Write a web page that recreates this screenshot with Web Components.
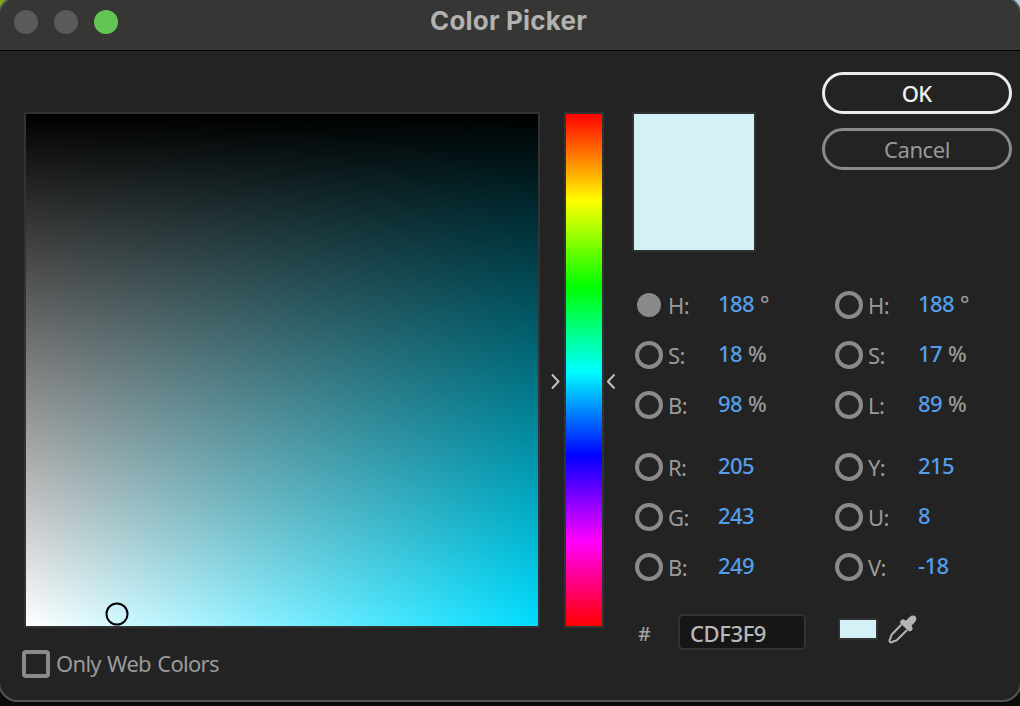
<!DOCTYPE html>
<html lang="en">
<head>
<meta charset="utf-8">
<title>Color Picker</title>
<style>
html,body{margin:0;height:100%;overflow:hidden;background:#0c0a0b}
body{background:linear-gradient(90deg,#7fa51c 0 20px,#0c0a0b 20px 1000px,#a9ccd6 1000px) 0 0/100% 12px no-repeat,#0c0a0b;font-family:"Noto Sans","Open Sans",sans-serif;font-size:22px;color:#9a9a9a}
</style>
</head>
<body>
<color-picker-window></color-picker-window>
<script>
function define(name, html, setup) {
  const template = document.createElement('template');
  template.innerHTML = html;
  customElements.define(name, class extends HTMLElement {
    constructor() {
      super();
      this.attachShadow({ mode: 'open' }).append(template.content.cloneNode(true));
    }
    connectedCallback() { if (setup) setup(this, this.shadowRoot); }
  });
}

define('title-bar', `
<style>
:host{display:grid;grid-template-columns:1fr auto 1fr;height:50px;background:#363634;border-bottom:1px solid #000;box-sizing:content-box}
.lights{display:flex;gap:16px;padding:10px 0 0 14px}
i{width:24px;height:24px;border-radius:50%;background:#5a5a58}
i.zoom{background:#62c655}
h1{margin:0;padding-right:3px;font:700 26px/42px Inter,sans-serif;letter-spacing:.2px;color:#b2b2b0}
</style>
<div class="lights"><i></i><i></i><i class="zoom"></i></div><h1><slot></slot></h1>`);

define('pill-button', `
<style>
:host{display:block}
button{display:block;box-sizing:border-box;width:190px;height:42px;border:3px solid #8a8a8a;border-radius:21px;background:none;padding:0;font:22px/34px "Noto Sans",sans-serif;letter-spacing:-.45px;color:#999}
:host([primary]) button{border-color:#ebebeb;color:#f0f0f0;font-weight:500;letter-spacing:-.8px;padding-right:1px}
</style>
<button><slot></slot></button>`);

define('shade-field', `
<style>
:host{display:block;position:relative;width:512px;height:512px;border:2px solid #323232;background:linear-gradient(#000,transparent),linear-gradient(90deg,#fff,#00ddff)}
svg{position:absolute;left:79px;top:488px;width:24px;height:24px}
</style><svg viewBox="0 0 24 24"><circle cx="12" cy="12" r="10.5" fill="none" stroke="#000" stroke-width="2"/></svg>`);

define('hue-slider', `
<style>
:host{display:flex;gap:4px}
.bar{width:36px;height:512px;border:2px solid #323232;background:linear-gradient(#f00,#ff0 17%,#0f0 33.7%,#0ff 50.2%,#00f 66.8%,#f0f 83.4%,#f00)}
svg{width:9px;height:18px;margin-top:260px;fill:none;stroke:#c0c0c0;stroke-width:2}
svg:last-child{margin-left:-1px}
</style>
<svg viewBox="0 0 9 18"><path d="M1 2.5 7.5 9.5 1 16.5"/></svg>
<div class="bar"></div>
<svg viewBox="0 0 9 18"><path d="M7.5 2.5 1 9.5 7.5 16.5"/></svg>`);

define('color-swatch', `
<style>:host{display:block;box-sizing:border-box;border:2px solid #323232;background:#d4f1f8}</style>`);

define('channel-row', `
<style>
:host{display:grid;grid-template-columns:28px 55px 1fr;height:50px;align-items:center}
i{box-sizing:border-box;width:28px;height:28px;border:4px solid #8a8a8a;border-radius:50%}
:host([selected]) i{width:24px;height:24px;margin-left:2px;background:#8a8a8a}
.label{padding:0 0 0 5px;line-height:30px;letter-spacing:-.6px;font-weight:450}
.value{padding-bottom:4px;line-height:30px;white-space:pre}
b{font-weight:500;color:#549ee9;letter-spacing:-.55px}
.unit{display:inline-block;margin-left:6px;font-weight:500}
</style>
<i></i><div class="label"></div><div class="value"><b></b><span class="unit"></span></div>`, (host, root) => {
  root.querySelector('.label').textContent = host.getAttribute('label') + ':';
  root.querySelector('b').textContent = host.getAttribute('value');
  const unit = root.querySelector('.unit'), u = host.getAttribute('unit');
  if (u) unit.textContent = u; else unit.remove();
});

define('channel-group', `
<style>:host{display:block}</style><slot></slot>`);

define('hex-row', `
<style>
:host{display:flex;align-items:flex-start;height:36px}
.hash{width:40px;box-sizing:border-box;font-size:20px;line-height:39px;color:#a0a0a0;font-weight:500}
.hex{box-sizing:border-box;width:128px;height:36px;border:2px solid #323232;border-radius:5px;background:#161616;padding-left:10px;line-height:34px;color:#b9b9b9;letter-spacing:-.4px;font-weight:500}
color-swatch{width:40px;height:22px;margin:4px 0 0 32px}
svg{width:30px;height:30px;margin:0 0 0 9.5px}
</style>
<div class="hash">#</div><div class="hex"><slot></slot></div><color-swatch></color-swatch>
<svg viewBox="0 0 30 30"><path d="M13.5 10.5 3.8 20.5C2.6 22 3 23.4 2.2 24.8 .5 27.4 2.3 29.4 5 27.7 6.4 26.8 7.7 27.3 9 26L19 16" fill="none" stroke="#b4b4b4" stroke-width="2" stroke-linejoin="round"/><path d="M12.7 6.7C13.8 5 15.6 5 17 6.3L18.1 6.5 21.6 3C26-.5 30.5 3.2 27.3 7.8L23.6 11.4 23.8 12.4C25.1 14 25.1 15.5 23.6 16.7L21 17.4 11.8 8.8Z" fill="#b4b4b4"/></svg>`);

define('check-option', `
<style>
:host{display:flex;align-items:center;height:30px}
i{box-sizing:border-box;width:28px;height:28px;border:4px solid #8a8a8a;border-radius:4px;margin-right:6px}
span{letter-spacing:-.7px;word-spacing:1.2px;line-height:28px;padding-bottom:2px}
</style><i></i><span><slot></slot></span>`);

define('color-picker-window', `
<style>
:host{display:block;box-sizing:border-box;width:1024px;height:706px;margin:-4px 0 0 -2px;border:2px solid #555;border-radius:20px;background:#232323;overflow:hidden}
title-bar{border-top:2px solid #363634}
main{display:grid;grid-template-columns:524px 84px 1fr;padding:21px 8px 0 24px}
.left,.hue{padding-top:40px}
.hue{padding-left:3px}
check-option{margin:21px 0 0 -2px}
.top{display:flex;justify-content:space-between;height:208px}
.top color-swatch{width:124px;height:140px;margin-top:40px}
.buttons{display:grid;gap:14px;align-content:start}
.channels{display:grid;grid-template-columns:200px 1fr;row-gap:12px;padding-left:3px}
hex-row{margin:22px 0 0 6px}
</style>
<title-bar>Color Picker</title-bar>
<main>
 <section class="left"><shade-field></shade-field><check-option>Only Web Colors</check-option></section>
 <section class="hue"><hue-slider></hue-slider></section>
 <section>
  <div class="top"><color-swatch></color-swatch><div class="buttons"><pill-button primary>OK</pill-button><pill-button>Cancel</pill-button></div></div>
  <div class="channels">
   <channel-group><channel-row selected label="H" value="188" unit="°"></channel-row><channel-row label="S" value="18" unit="%"></channel-row><channel-row label="B" value="98" unit="%"></channel-row></channel-group>
   <channel-group><channel-row label="H" value="188" unit="°"></channel-row><channel-row label="S" value="17" unit="%"></channel-row><channel-row label="L" value="89" unit="%"></channel-row></channel-group>
   <channel-group><channel-row label="R" value="205"></channel-row><channel-row label="G" value="243"></channel-row><channel-row label="B" value="249"></channel-row></channel-group>
   <channel-group><channel-row label="Y" value="215"></channel-row><channel-row label="U" value="8"></channel-row><channel-row label="V" value="-18"></channel-row></channel-group>
  </div>
  <hex-row>CDF3F9</hex-row>
 </section>
</main>`);
</script>
</body>
</html>
